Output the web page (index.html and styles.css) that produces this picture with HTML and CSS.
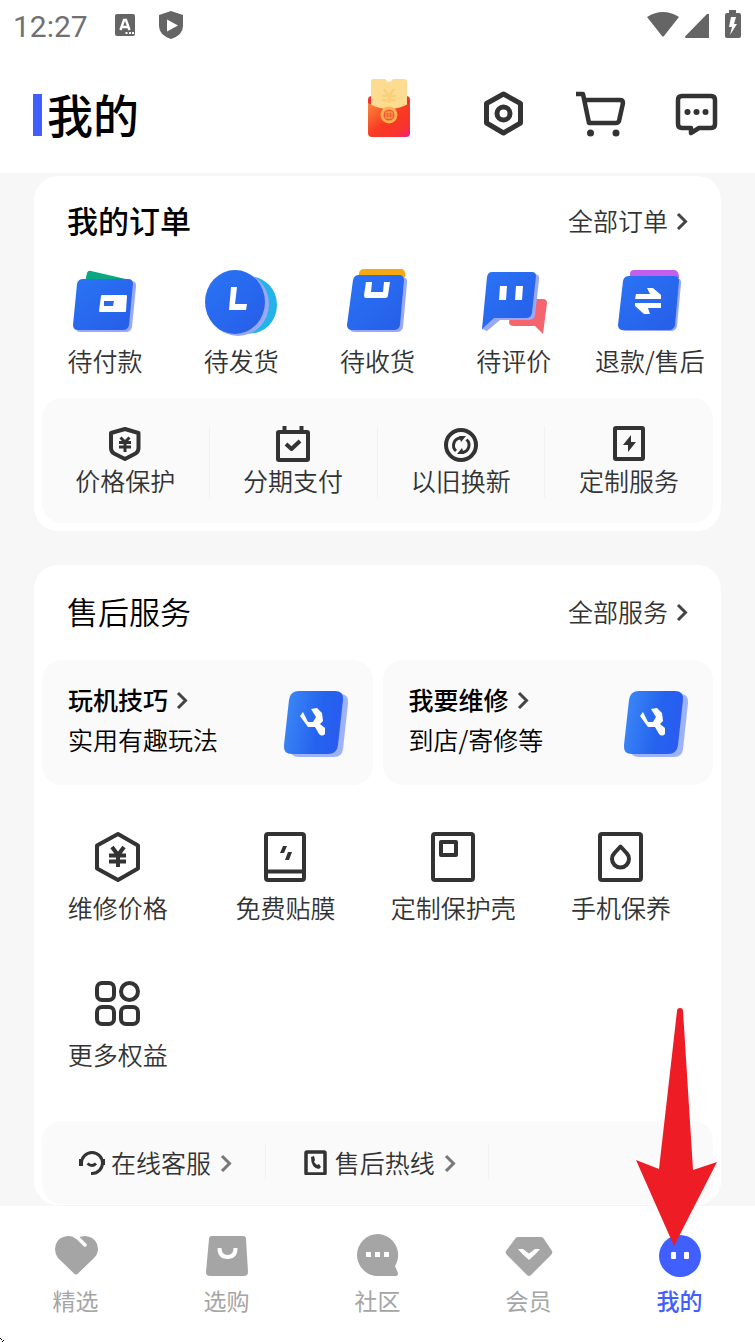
FILE: index.html
```
<!DOCTYPE html>
<html lang="zh-CN">
<head>
  <meta charset="UTF-8">
  <meta name="viewport" content="width=device-width, initial-scale=1.0">
  <title>我的</title>
  <link rel="stylesheet" href="styles.css">
</head>
<body>

<!-- shared gradients and icons -->
<svg class="defs" width="0" height="0" aria-hidden="true">
  <defs>
    <linearGradient id="blue" x1="0" y1="0" x2="1" y2="1">
      <stop offset="0" stop-color="#2a74f5"/>
      <stop offset="1" stop-color="#265de8"/>
    </linearGradient>
    <linearGradient id="blueTool" x1="0" y1="0.4" x2="1" y2="0.6">
      <stop offset="0" stop-color="#3b86f6"/>
      <stop offset="0.6" stop-color="#2463ee"/>
      <stop offset="1" stop-color="#2a5bf0"/>
    </linearGradient>
    <linearGradient id="packet" x1="0" y1="0" x2="1" y2="1">
      <stop offset="0" stop-color="#f98a3c"/>
      <stop offset="0.5" stop-color="#f83a22"/>
      <stop offset="0.8" stop-color="#f83330"/>
      <stop offset="1" stop-color="#f7188c"/>
    </linearGradient>
    <symbol id="chevron" viewBox="0 0 12 20">
      <path d="M2 4l7.500 7.500L2 19" fill="none" stroke="currentColor" stroke-width="3"/>
    </symbol>
    <symbol id="tool" viewBox="0 0 68 70">
      <path d="M22 5h35q9 0 8 9l-5 46q-1 8-9 8H16q-9 0-8-8z" fill="#9db2fa"/>
      <path d="M16 2h36q9 0 8 9l-5 45q-1 9-10 9H9q-9 0-8-9L6 11q1-9 10-9z" fill="url(#blueTool)"/>
      <path d="M20 23l-3 4 8 11h7l4 7q3 3 6 0v-6l-5-4 3-3-1-8-5-5-6 1 5 8-3 5h-5z" fill="#fff"/>
    </symbol>
  </defs>
</svg>

<div class="status">
  <span class="time">12:27</span>
  <svg class="status-a" width="20" height="30" viewBox="0 0 20 30" aria-hidden="true">
    <rect y="4" width="20" height="22" rx="2" fill="#656565"/>
    <path d="M5.500 20L9 10h2l3.500 10M7 17h6" fill="none" stroke="#fff" stroke-width="2.400"/>
    <path d="M10.500 23h2M14 23h2M17 23h2" stroke="#fff" stroke-width="2"/>
  </svg>
  <svg width="24" height="30" viewBox="0 0 24 30" aria-hidden="true">
    <path d="M12 1l12 4v11q0 9-12 13Q0 25 0 16V5z" fill="#656565"/>
    <path d="M8 9.500l11 6-11 6z" fill="#fff"/>
  </svg>
  <svg class="status-right" width="96" height="30" viewBox="0 0 96 30" aria-hidden="true">
    <path d="M2 7q16-10 32 0L19 26q-1 1-2 0z" fill="#656565"/>
    <path d="M64 4v24H40.500q-1-1 0-2L62 4z" fill="#656565"/>
    <path d="M84 0h7v3h3q2 0 2 2v21q0 2-2 2H82q-2 0-2-2V5q0-2 2-2h2z" fill="#656565"/>
    <path d="M86 7l-2 10h3l-2 8 7-11h-3l2-7z" fill="#fff"/>
  </svg>
</div>

<header class="header">
  <h1>我的</h1>
  <nav class="tools">
    <a class="gift" href="#" aria-label="红包">
      <svg width="52" height="60" viewBox="0 0 52 60">
        <rect x="5" y="18" width="42" height="28" rx="4" fill="#f2332b"/>
        <path d="M10 1h12l1 1q3 4 6 0l1-1h11q3 0 3 3v36H8V4q0-3 2-3z" fill="#fddc92"/>
        <path d="M21 11l5 7 5-7M19 18h14M19 22h14M26 18v7" fill="none" stroke="#f9cf7a" stroke-width="2.500"/>
        <path d="M5 25q21 12 42 0v30q0 4-4 4H9q-4 0-4-4z" fill="url(#packet)"/>
        <circle cx="26" cy="37" r="7" fill="#f7523a" stroke="#f8b34d" stroke-width="3"/>
        <path d="M23 34h6v6h-6zM26 33v8" fill="none" stroke="#f8b34d" stroke-width="1"/>
      </svg>
    </a>
    <a href="#" aria-label="设置">
      <svg class="line" width="52" height="60" viewBox="0 0 52 60">
        <path d="M25.500 16L42.500 25.500V45L25.500 55 8.500 45V25.500z" stroke-width="5"/>
        <circle cx="25.500" cy="35.500" r="6.500" stroke-width="5"/>
      </svg>
    </a>
    <a href="#" aria-label="购物车">
      <svg class="line" width="52" height="60" viewBox="0 0 52 60">
        <path d="M2 16h7l6 29h27q2 0 3-2l4-18q0-3-3-3H11" stroke-width="4.500"/>
        <circle cx="16.500" cy="55" r="3.500" class="solid"/>
        <circle cx="42" cy="55" r="3.500" class="solid"/>
      </svg>
    </a>
    <a href="#" aria-label="消息">
      <svg class="line" width="52" height="60" viewBox="0 0 52 60">
        <path d="M12 18h29q4 0 4 4v24q0 4-4 4H29l-8 5v-5h-9q-4 0-4-4V22q0-4 4-4z" stroke-width="4.500"/>
        <circle cx="17.500" cy="34" r="3" class="solid"/>
        <circle cx="26.500" cy="34" r="3" class="solid"/>
        <circle cx="35.500" cy="34" r="3" class="solid"/>
      </svg>
    </a>
  </nav>
</header>

<main class="content">
  <section class="card">
    <div class="card-head">
      <h2 class="strong">我的订单</h2>
      <a class="more" href="#">全部订单 <svg class="chevron" width="12" height="20"><use href="#chevron"/></svg></a>
    </div>

    <div class="orders">
      <a href="#">
        <svg width="80" height="72" viewBox="0 0 80 72">
          <path d="M20 16l2-9q1-3 4-2l39 9z" fill="#0aa882"/>
          <path d="M21 15h45q6 0 5 6l-4 40q-1 5-6 5H16q-6 0-5-5z" fill="#9aa9f7"/>
          <path d="M18 13h45q5 0 5 5l-4 41q-1 5-6 5H13q-5 0-5-5l4-41q1-5 6-5z" fill="url(#blue)"/>
          <path d="M37 29h24q1 0 1 1l-1 15q0 1-1 1H35q-1 0-1-1l2-15q0-1 1-1zM39 35v5h9l1-5z" fill="#fff" fill-rule="evenodd"/>
        </svg>
        <span>待付款</span>
      </a>
      <a href="#">
        <svg width="80" height="72" viewBox="0 0 80 72">
          <ellipse cx="49" cy="39" rx="27" ry="28.500" fill="#24b3e8"/>
          <ellipse cx="37" cy="38" rx="31" ry="32" fill="#9aa9f7"/>
          <ellipse cx="34" cy="36" rx="30" ry="32" fill="url(#blue)"/>
          <path d="M30 21h6l-2 17h12l-1 6H28z" fill="#fff"/>
        </svg>
        <span>待发货</span>
      </a>
      <a href="#">
        <svg width="80" height="72" viewBox="0 0 80 72">
          <path d="M21 12l1-5q1-4 5-4h37q5 0 4 8z" fill="#f5a80f"/>
          <path d="M24 11h41q6 0 5 6l-4 44q-1 5-6 5H18q-6 0-5-5z" fill="#9aa9f7"/>
          <path d="M22 9h40q5 0 5 5l-4 45q-1 5-6 5H15q-5 0-5-5l6-45q1-5 6-5z" fill="url(#blue)"/>
          <path d="M29 16h6l-1 10h12l1-10h6l-2 13q0 3-3 3H29q-2 0-2-3z" fill="#fff"/>
        </svg>
        <span>待收货</span>
      </a>
      <a href="#">
        <svg width="80" height="72" viewBox="0 0 80 72">
          <path d="M40 33h29q4 0 4 4l-4 31-8-8H40q-5 0-5-4z" fill="#f5656d"/>
          <path d="M22 8h38q6 0 5 6l-4 35q-1 5-6 5H26L13 65l-5-2z" fill="#9aa9f7"/>
          <path d="M18 6h40q4 0 4 4l-4 37q-1 5-6 5H20L8 63l5-52q1-5 5-5z" fill="url(#blue)"/>
          <path d="M26 20h7l-1 14h-7zM42 20h7l-1 14h-7z" fill="#fff"/>
        </svg>
        <span>待评价</span>
      </a>
      <a href="#">
        <svg width="80" height="72" viewBox="0 0 80 72">
          <path d="M20 12V8q0-4 4-4h40q5 0 5 8z" fill="#c35fec"/>
          <path d="M21 12h45q6 0 5 6l-4 42q-1 5-6 5H16q-6 0-5-5z" fill="#9aa9f7"/>
          <path d="M19 10h45q5 0 5 5l-4 44q-1 5-6 5H13q-5 0-5-5l5-44q1-5 6-5z" fill="url(#blue)"/>
          <path d="M26 28h14l-3-6h6l8 7v4H25zM25 37h26v5H38l2 6h-6l-9-8z" fill="#fff"/>
        </svg>
        <span>退款/售后</span>
      </a>
    </div>

    <div class="panel benefits">
      <a href="#">
        <svg class="line" width="36" height="36" viewBox="0 0 36 36">
          <path d="M18 3l13.500 4v15q0 4-3 5.500L18 33 7 27.500Q4 26 4 22V7z" stroke-width="4"/>
          <path d="M13.500 11.500L18 16l4.500-4.500M12 16.500h12M12 21h12M18 16v10" stroke-width="3"/>
        </svg>
        <span>价格保护</span>
      </a>
      <a href="#">
        <svg class="line" width="36" height="36" viewBox="0 0 36 36">
          <rect x="3" y="6" width="30" height="28" rx="1" stroke-width="4"/>
          <path d="M9.500 0v6M26.500 0v6" stroke-width="4"/>
          <path d="M11 18l5.500 5 8.500-8" stroke-width="4"/>
        </svg>
        <span>分期支付</span>
      </a>
      <a href="#">
        <svg class="line" width="36" height="36" viewBox="0 0 36 36">
          <circle cx="18" cy="19" r="15" stroke-width="4"/>
          <path d="M13 25a7.500 7.500 0 0 1 4-13M23.500 13.500a7.500 7.500 0 0 1-4 13" stroke-width="3"/>
          <path d="M16 10h7l-5 6zM21 28h-7l5-6z" class="solid"/>
        </svg>
        <span>以旧换新</span>
      </a>
      <a href="#">
        <svg class="line" width="36" height="36" viewBox="0 0 36 36">
          <rect x="4" y="2" width="28" height="31" rx="1" stroke-width="4"/>
          <path d="M20 9l-8 10h5v7l8-10h-5z" class="solid"/>
        </svg>
        <span>定制服务</span>
      </a>
    </div>
  </section>

  <section class="card card-service">
    <div class="card-head">
      <h2>售后服务</h2>
      <a class="more" href="#">全部服务 <svg class="chevron" width="12" height="20"><use href="#chevron"/></svg></a>
    </div>

    <div class="tips">
      <a class="panel tip" href="#">
        <div class="tip-text">
          <h3>玩机技巧 <svg class="chevron" width="12" height="20"><use href="#chevron"/></svg></h3>
          <p>实用有趣玩法</p>
        </div>
        <svg width="68" height="70"><use href="#tool"/></svg>
      </a>
      <a class="panel tip" href="#">
        <div class="tip-text">
          <h3>我要维修 <svg class="chevron" width="12" height="20"><use href="#chevron"/></svg></h3>
          <p>到店/寄修等</p>
        </div>
        <svg width="68" height="70"><use href="#tool"/></svg>
      </a>
    </div>

    <div class="services">
      <a href="#">
        <svg class="line" width="52" height="52" viewBox="0 0 52 52">
          <path d="M26 3l20 11.500v23L26 49 5 37.500v-23z" stroke-width="4"/>
          <path d="M20 16l6 8 6-8M17 24.500h17M17 30.500h17M26 24v12" stroke-width="4"/>
        </svg>
        <span>维修价格</span>
      </a>
      <a href="#">
        <svg class="line" width="52" height="52" viewBox="0 0 52 52">
          <rect x="6" y="3" width="38" height="46" rx="2" stroke-width="4"/>
          <path d="M6 40.500h38" stroke-width="4"/>
          <path d="M23 15h4l-3 7h-4zM28 21h4l-3 8h-4z" class="solid"/>
        </svg>
        <span>免费贴膜</span>
      </a>
      <a href="#">
        <svg class="line" width="52" height="52" viewBox="0 0 52 52">
          <rect x="6" y="3" width="40" height="46" rx="2" stroke-width="4"/>
          <rect x="14" y="11" width="15" height="13" stroke-width="4"/>
        </svg>
        <span>定制保护壳</span>
      </a>
      <a href="#">
        <svg class="line" width="52" height="52" viewBox="0 0 52 52">
          <rect x="5" y="3" width="41" height="46" rx="2" stroke-width="4"/>
          <path d="M25.500 15.500l6 6.500a8.500 8.500 0 1 1-12 0z" stroke-width="4"/>
        </svg>
        <span>手机保养</span>
      </a>
      <a href="#">
        <svg class="line" width="52" height="52" viewBox="0 0 52 52">
          <rect x="5" y="5" width="17" height="17" rx="5" stroke-width="4"/>
          <circle cx="37.500" cy="13.500" r="8.500" stroke-width="4"/>
          <rect x="5" y="29" width="17" height="17" rx="5" stroke-width="4"/>
          <rect x="29" y="29" width="17" height="17" rx="5" stroke-width="4"/>
        </svg>
        <span>更多权益</span>
      </a>
    </div>

    <div class="panel contact">
      <a href="#">
        <svg class="line" width="26" height="26" viewBox="0 0 26 26">
          <path d="M2.500 17v-3a10.500 10.500 0 1 1 10.500 10.500h-1" stroke-width="3"/>
          <path d="M2 10v7M24 10v6" stroke-width="4"/>
          <path d="M8.500 14.500q4.500 4 8.500 0" stroke-width="3"/>
        </svg>
        <span>在线客服</span>
        <svg class="chevron" width="12" height="20"><use href="#chevron"/></svg>
      </a>
      <a href="#">
        <svg class="line" width="26" height="26" viewBox="0 0 26 26">
          <rect x="3" y="3" width="19" height="22" rx="1" stroke-width="3.500"/>
          <path d="M8 8l3-1 1 4-1 2 3 3 2-1 2 3-2 2Q8 19 8 8z" class="solid"/>
        </svg>
        <span>售后热线</span>
        <svg class="chevron" width="12" height="20"><use href="#chevron"/></svg>
      </a>
    </div>
  </section>
</main>

<nav class="tabbar">
  <a href="#">
    <svg width="52" height="48" viewBox="0 0 52 48">
      <path d="M26 43.500q-1 0-2-1L8 27Q5 23 5 18 6 6 18 5q5 0 8 3 4-3 9-3 12 1 13 13 0 5-4 9L28 42.500q-1 1-2 1z" fill="currentColor"/>
      <path d="M25 4l10 10" stroke="#fff" stroke-width="3.500" stroke-linecap="round"/>
    </svg>
    <span>精选</span>
  </a>
  <a href="#">
    <svg width="52" height="48" viewBox="0 0 52 48">
      <path d="M11 5h31q3 0 3 3l2 33q0 4-4 4H9q-4 0-4-4L8 8q0-3 3-3z" fill="currentColor"/>
      <path d="M18.500 17q0 9 8 9t8-9" fill="none" stroke="#fff" stroke-width="4"/>
    </svg>
    <span>选购</span>
  </a>
  <a href="#">
    <svg width="52" height="48" viewBox="0 0 52 48">
      <path d="M26 3a21 21 0 0 1 17 32l3 7q0 3-2 3H26a21 21 0 0 1 0-42z" fill="currentColor"/>
      <path d="M14 21h5v5h-5zM23 21h5v5h-5zM32 21h5v5h-5z" fill="#fff"/>
    </svg>
    <span>社区</span>
  </a>
  <a href="#">
    <svg width="52" height="48" viewBox="0 0 52 48">
      <path d="M15 6h23q2 0 3 2l8 12q1 2-1 4L28 44q-2 2-4 0L4 24q-2-2-1-4l9-12q1-2 3-2z" fill="currentColor"/>
      <path d="M15 18h5l6 4.500 6-4.500h5q-2 3-11 11-9-8-11-11z" fill="#fff"/>
    </svg>
    <span>会员</span>
  </a>
  <a class="active" href="#" aria-current="page">
    <svg width="52" height="48" viewBox="0 0 52 48">
      <circle cx="26" cy="25" r="21" fill="currentColor"/>
      <rect x="17" y="21" width="5" height="7" rx="1" fill="#fff"/>
      <rect x="30" y="21" width="5" height="7" rx="1" fill="#fff"/>
    </svg>
    <span>我的</span>
    <svg class="arrow" width="82" height="240" viewBox="0 0 82 240" aria-hidden="true">
      <path d="M41 4q0-3 3-3t3 3l10 159 24-8-43 84L0 153l23 9z" fill="#ee1c25"/>
    </svg>
  </a>
  <svg class="cursor" width="4" height="4" viewBox="0 0 4 4" aria-hidden="true">
    <path d="M0 0h1v1H0zM1 1h1v1H1zM2 3h1v1H2zM3 2h1v1H3z" fill="#000"/>
  </svg>
</nav>

</body>
</html>
```
FILE: styles.css
```
* {
  box-sizing: border-box;
}
body {
  margin: 0;
  min-height: 100vh;
  display: flex;
  flex-direction: column;
  font-family: "Noto Sans CJK SC", sans-serif;
  font-size: 25px;
  line-height: 36px;
  font-weight: 350;
  color: #333;
  background: #fff;
}
h1, h2, h3, p {
  margin: 0;
}
a {
  color: inherit;
  text-decoration: none;
}
svg {
  display: block;
  flex: none;
}
.defs {
  position: absolute;
}

/* line icons */
.line {
  fill: none;
  stroke: #333;
  stroke-linejoin: round;
}
.line .solid {
  fill: #333;
  stroke: none;
}
.chevron {
  color: #444;
}

/* status bar */
.status {
  display: flex;
  align-items: center;
  height: 50px;
  padding: 0 14px 0 13px;
}
.time {
  padding-top: 3px;
  font-family: Roboto, sans-serif;
  font-size: 30px;
  font-weight: 400;
  color: #707070;
}
.status-a {
  margin: 0 24px 0 27px;
}
.status-right {
  margin-left: auto;
}

/* header */
.header {
  display: flex;
  align-items: center;
  justify-content: space-between;
  padding: 28px 33px 35px;
}
.header h1 {
  display: flex;
  align-items: center;
  gap: 5px;
  padding-top: 10px;
  font-size: 46px;
  line-height: 48px;
  font-weight: 500;
  color: #000;
}
.header h1::before {
  content: "";
  width: 9px;
  height: 42px;
  margin-top: 3px;
  background: #415fff;
}
.tools {
  display: flex;
  gap: 44px;
}
.gift {
  margin-right: 19px;
}

/* cards */
.content {
  flex: 1;
  display: flex;
  flex-direction: column;
  gap: 34px;
  padding: 3px 34px 1px;
  background: #f7f7f7;
}
.card {
  padding-bottom: 8px;
  border-radius: 24px;
  background: #fff;
}
.card-service {
  padding-top: 2px;
  padding-bottom: 1px;
}
.card-head {
  display: flex;
  align-items: center;
  justify-content: space-between;
  padding: 21px 33px 23px;
}
.card-head h2 {
  font-size: 31px;
  line-height: 46px;
  font-weight: 350;
  color: #000;
}
.card-head .strong {
  font-weight: 500;
}
.more {
  display: flex;
  align-items: center;
  gap: 8px;
}
.panel {
  margin: 0 8px;
  border-radius: 20px;
  background: #fafafa;
}

.orders {
  display: grid;
  grid-template-columns: repeat(5, 1fr);
  padding: 0 3px;
}
.orders a, .benefits a, .services a {
  display: flex;
  flex-direction: column;
  align-items: center;
  white-space: nowrap;
}
.orders a {
  gap: 4px;
}

.benefits {
  display: grid;
  grid-template-columns: repeat(4, 1fr);
  margin-top: 20px;
  padding: 28px 0 25px;
}
.benefits a {
  border-right: 1px solid #f2f2f2;
}
.benefits a:last-child {
  border-right: 0;
}

.tips {
  display: grid;
  grid-template-columns: 1fr 1fr;
  gap: 10px;
  margin: 3px 8px 0;
}
.tip {
  display: flex;
  align-items: flex-end;
  justify-content: space-between;
  margin: 0;
  padding: 21px 22px 26px 26px;
  color: #000;
}
.tip-text {
  padding-bottom: 2px;
}
.tip h3 {
  display: flex;
  align-items: center;
  gap: 8px;
  margin-bottom: 4px;
  font-size: 25px;
  font-weight: 500;
}

.services {
  display: grid;
  grid-template-columns: repeat(4, 1fr);
  row-gap: 53px;
  padding: 46px 16px 49px 0;
}
.services a {
  gap: 6px;
}

.contact {
  display: grid;
  grid-template-columns: repeat(3, 1fr);
  padding: 23px 0 24px;
}
.contact a {
  display: flex;
  align-items: center;
  gap: 6px;
  padding-left: 37px;
  border-right: 1px solid #f2f2f2;
}
.contact .chevron {
  color: #777;
  margin-left: 3px;
}

/* bottom tabs */
.tabbar {
  position: sticky;
  bottom: 0;
  display: grid;
  grid-template-columns: repeat(5, 1fr);
  padding: 25px 0 25px;
  background: #fff;
}
.tabbar a {
  position: relative;
  display: flex;
  flex-direction: column;
  align-items: center;
  gap: 4px;
  font-size: 23px;
  line-height: 34px;
  font-weight: 400;
  color: #a5a5a5;
}
.tabbar .active {
  font-weight: 500;
  color: #415fff;
}
.arrow {
  position: absolute;
  left: 32px;
  bottom: 70px;
  pointer-events: none;
}
.cursor {
  position: absolute;
  left: 0;
  bottom: 0;
}
```
